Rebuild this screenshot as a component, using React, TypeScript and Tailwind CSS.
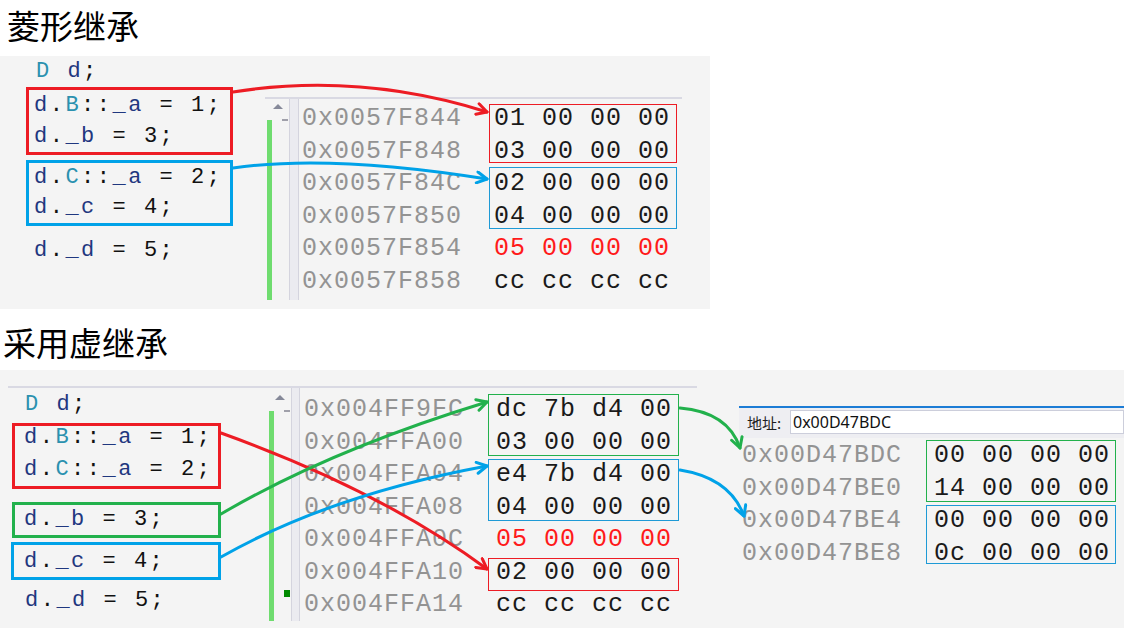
import React from "react";

const N = ({ children }: { children: React.ReactNode }) => (
  <span className="text-[#1f377f]">{children}</span>
);
const T = ({ children }: { children: React.ReactNode }) => (
  <span className="text-[#2b91af]">{children}</span>
);

const CODE =
  "font-['Liberation_Mono',monospace] text-[22px] tracking-[2.5px] whitespace-pre text-[#111]";
const HEX =
  "font-['Liberation_Mono',monospace] text-[25px] tracking-[1px] leading-[32.5px] whitespace-pre";
const CJK = "font-['Noto_Sans_CJK_SC',sans-serif]";

function Row({ addr, bytes, red }: { addr: string; bytes: string; red?: boolean }) {
  return (
    <div className="flex h-[32.5px]">
      <span className="w-[192px] shrink-0 text-[#939393]">{addr}</span>
      <span className={red ? "text-[#ff1a1a]" : "text-[#1a1a1a]"}>{bytes}</span>
    </div>
  );
}

function Gutter({
  barTop,
  triTop,
  square,
}: {
  barTop: string;
  triTop: string;
  square?: boolean;
}) {
  return (
    <>
      <div className="w-[7px] shrink-0 pl-[2px] flex flex-col">
        <div className={`${barTop} w-[5px] flex-1 bg-[#6fdc6f]`} />
      </div>
      <div className="w-[17px] shrink-0 flex flex-col">
        <div
          className={`${triTop} ml-[1px] w-0 h-0 border-x-[5px] border-x-transparent border-b-[5px] border-b-[#868999]`}
        />
        <div className="mt-[10px] ml-[10px] w-[6px] h-[2px] bg-[#a0a0aa]" />
        {square && <div className="mt-[178px] ml-[10px] w-[6px] h-[7px] bg-[#008a00]" />}
      </div>
    </>
  );
}

function Panel1() {
  return (
    <div className="flex w-[710px] h-[253px] bg-[#f4f4f4]">
      <div className={`w-[265px] shrink-0 flex flex-col ${CODE}`}>
        <div className="pl-[36px] h-[31px] leading-[31px]">
          <T>D</T> <N>d</N>;
        </div>
        <div className="ml-[26px] w-[207px] border-[3px] border-[#ed1c24] pl-[5px]">
          <div className="leading-[31px]">
            <N>d</N>.<T>B</T>::<N>_a</N> = 1;
          </div>
          <div className="leading-[31px]">
            <N>d</N>.<N>_b</N> = 3;
          </div>
        </div>
        <div className="mt-[5px] ml-[26px] w-[207px] border-[3px] border-[#00a2e8] pl-[5px]">
          <div className="leading-[30px]">
            <N>d</N>.<T>C</T>::<N>_a</N> = 2;
          </div>
          <div className="leading-[30px]">
            <N>d</N>.<N>_c</N> = 4;
          </div>
        </div>
        <div className="mt-[9px] pl-[34px] leading-[31px]">
          <N>d</N>.<N>_d</N> = 5;
        </div>
      </div>
      <div className="mt-[41px] w-[417px] h-[203px] border-t-2 border-[#d9d9e3] flex">
        <Gutter barTop="mt-[21px]" triTop="mt-[5px]" />
        <div className="w-[10px] shrink-0 bg-[#ebebf0] border-x border-[#d4d4de]" />
        <div className={`flex-1 pl-[3px] pt-[4px] ${HEX}`}>
          <div className="relative">
            <Row addr="0x0057F844" bytes="01 00 00 00" />
            <Row addr="0x0057F848" bytes="03 00 00 00" />
            <div className="absolute left-[187px] w-[188px] top-[1px] h-[59px] border border-[#ed1c24]" />
          </div>
          <div className="relative">
            <Row addr="0x0057F84C" bytes="02 00 00 00" />
            <Row addr="0x0057F850" bytes="04 00 00 00" />
            <div className="absolute left-[187px] w-[188px] top-[-1px] h-[62px] border border-[#1e9ad6]" />
          </div>
          <Row addr="0x0057F854" bytes="05 00 00 00" red />
          <Row addr="0x0057F858" bytes="cc cc cc cc" />
        </div>
      </div>
    </div>
  );
}

function Panel2() {
  return (
    <div className="flex items-start h-[258px] bg-[#f4f4f4] pt-[16px]">
      <div className="ml-[8px] w-[689px] h-[235px] shrink-0 border-t-2 border-[#d9d9e3] flex">
        <div className={`w-[259px] shrink-0 flex flex-col pt-[1px] ${CODE}`}>
          <div className="pl-[17px] leading-[31px]">
            <T>D</T> <N>d</N>;
          </div>
          <div className="mt-[3px] ml-[4px] w-[209px] border-[3px] border-[#ed1c24] pl-[9px] pb-[4px] flex flex-col gap-[8px]">
            <div className="leading-[24px]">
              <N>d</N>.<T>B</T>::<N>_a</N> = 1;
            </div>
            <div className="leading-[24px]">
              <N>d</N>.<T>C</T>::<N>_a</N> = 2;
            </div>
          </div>
          <div className="mt-[13px] ml-[4px] w-[209px] border-[3px] border-[#22b14c] pl-[9px]">
            <div className="leading-[30px]">
              <N>d</N>.<N>_b</N> = 3;
            </div>
          </div>
          <div className="mt-[4px] ml-[3px] w-[210px] border-[3px] border-[#00a2e8] pl-[10px] pt-[1px]">
            <div className="leading-[31px]">
              <N>d</N>.<N>_c</N> = 4;
            </div>
          </div>
          <div className="mt-[5px] pl-[17px] leading-[31px]">
            <N>d</N>.<N>_d</N> = 5;
          </div>
        </div>
        <Gutter barTop="mt-[23px]" triTop="mt-[7px]" square />
        <div className="w-[9px] shrink-0 bg-[#ebebf0] border-x border-[#d4d4de]" />
        <div className={`flex-1 pl-[4px] pt-[6px] ${HEX}`}>
          <div className="relative">
            <Row addr="0x004FF9FC" bytes="dc 7b d4 00" />
            <Row addr="0x004FFA00" bytes="03 00 00 00" />
            <div className="absolute left-[184px] w-[191px] top-0 h-[62px] border border-[#22b14c]" />
          </div>
          <div className="relative">
            <Row addr="0x004FFA04" bytes="e4 7b d4 00" />
            <Row addr="0x004FFA08" bytes="04 00 00 00" />
            <div className="absolute left-[184px] w-[191px] top-0 h-[62px] border border-[#1e9ad6]" />
          </div>
          <Row addr="0x004FFA0C" bytes="05 00 00 00" red />
          <div className="relative">
            <Row addr="0x004FFA10" bytes="02 00 00 00" />
            <div className="absolute left-[184px] w-[191px] top-[1.5px] h-[33px] border border-[#ed1c24]" />
          </div>
          <Row addr="0x004FFA14" bytes="cc cc cc cc" />
        </div>
      </div>
      <div className="ml-[42px] mt-[20px] flex-1 border-t-2 border-[#1c7cd5]">
        <div className="h-[30px] bg-[#eeeef2] flex items-start">
          <div className={`w-[51px] shrink-0 pl-[8px] text-[15px] leading-[30px] text-[#1e1e1e] ${CJK}`}>
            地址:
          </div>
          <div className="mt-[2px] flex-1 h-[24px] bg-white border border-[#cccedb] pl-[2px] text-[16px] leading-[22px] text-[#111] font-['Noto_Sans',sans-serif]">
            0x00D47BDC
          </div>
        </div>
        <div className={`pl-[3px] pt-[2px] ${HEX}`}>
          <div className="relative">
            <Row addr="0x00D47BDC" bytes="00 00 00 00" />
            <Row addr="0x00D47BE0" bytes="14 00 00 00" />
            <div className="absolute left-[184px] w-[190px] top-0 h-[62px] border border-[#22b14c]" />
          </div>
          <div className="relative">
            <Row addr="0x00D47BE4" bytes="00 00 00 00" />
            <Row addr="0x00D47BE8" bytes="0c 00 00 00" />
            <div className="absolute left-[184px] w-[190px] top-0 h-[59px] border border-[#1e9ad6]" />
          </div>
        </div>
      </div>
    </div>
  );
}

function Marker({ id, color }: { id: string; color: string }) {
  return (
    <marker
      id={id}
      viewBox="0 0 14 14"
      refX="12"
      refY="7"
      markerWidth="14"
      markerHeight="14"
      orient="auto"
      markerUnits="userSpaceOnUse"
    >
      <path
        d="M2 1.5 L12 7 L2 12.5"
        fill="none"
        stroke={color}
        strokeWidth="3"
        strokeLinecap="round"
        strokeLinejoin="round"
      />
    </marker>
  );
}

export default function App() {
  const R = "#ed1c24";
  const B = "#00a2e8";
  const G = "#22b14c";
  return (
    <div className="relative w-[1124px] h-[628px] overflow-hidden bg-white">
      <div className={`h-[56px] pl-[7px] text-[33px] leading-[50px] text-black ${CJK}`}>菱形继承</div>
      <Panel1 />
      <div className={`h-[61px] pl-[3px] pt-[8px] text-[33px] leading-[50px] text-black ${CJK}`}>
        采用虚继承
      </div>
      <Panel2 />
      <svg
        className="absolute inset-0 pointer-events-none"
        width="1124"
        height="628"
        viewBox="0 0 1124 628"
      >
        <defs>
          <Marker id="mr" color={R} />
          <Marker id="mb" color={B} />
          <Marker id="mg" color={G} />
        </defs>
        <g fill="none" strokeWidth="3" strokeLinecap="round">
          <path d="M233 92 Q360 72 487 112" stroke={R} markerEnd="url(#mr)" />
          <path d="M233 168 Q330 154 487 179" stroke={B} markerEnd="url(#mb)" />
          <path d="M221 433 Q380 490 487 569" stroke={R} markerEnd="url(#mr)" />
          <path d="M221 514 Q330 450 487 402" stroke={G} markerEnd="url(#mg)" />
          <path d="M221 557 Q330 495 487 466" stroke={B} markerEnd="url(#mb)" />
          <path d="M680 408 Q728 412 740 448" stroke={G} markerEnd="url(#mg)" />
          <path d="M680 470 Q730 478 744 516" stroke={B} markerEnd="url(#mb)" />
        </g>
      </svg>
    </div>
  );
}
